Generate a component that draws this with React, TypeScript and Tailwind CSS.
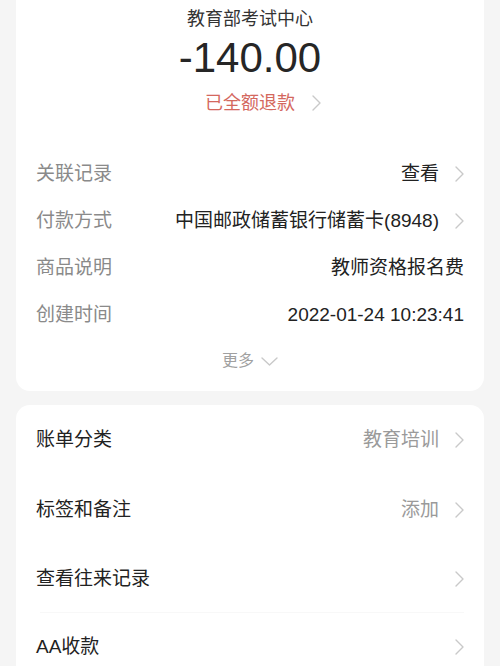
import React from "react";

const FONT = { fontFamily: '"Liberation Sans", "Noto Sans CJK SC", sans-serif' };

function ChevronRight({ className = "" }: { className?: string }) {
  return (
    <svg width="9" height="16" viewBox="0 0 9 16" className={className} fill="none">
      <polyline points="1,1 8,8 1,15" stroke="#c9c9c9" strokeWidth="1.4" strokeLinecap="round" strokeLinejoin="round" />
    </svg>
  );
}

function ChevronDown() {
  return (
    <svg width="17" height="9" viewBox="0 0 17 9" fill="none">
      <polyline points="1,1 8.5,8 16,1" stroke="#c9c9c9" strokeWidth="1.4" strokeLinecap="round" strokeLinejoin="round" />
    </svg>
  );
}

function InfoRow({ label, value, arrow }: { label: string; value: string; arrow?: boolean }) {
  return (
    <div className="flex h-[47px] items-center justify-between">
      <span className="text-[19px] leading-[24px] text-[#8a8a8a]">{label}</span>
      <div className="flex items-center">
        <span className="text-[19px] leading-[24px] text-[#222]">{value}</span>
        {arrow && <ChevronRight className="ml-[16px]" />}
      </div>
    </div>
  );
}

function ActionRow({ label, value, h }: { label: string; value?: string; h: string }) {
  return (
    <div className={`flex items-center justify-between ${h}`}>
      <span className="text-[19px] leading-[24px] text-[#222]">{label}</span>
      <div className="flex items-center">
        {value && <span className="text-[19px] leading-[24px] text-[#9a9a9a]">{value}</span>}
        <ChevronRight className="ml-[16px]" />
      </div>
    </div>
  );
}

export default function App() {
  return (
    <div className="h-[666px] w-[500px] overflow-hidden bg-[#f5f5f5] px-4" style={FONT}>
      <div className="rounded-b-[14px] bg-white pl-5 pr-[20px] pt-[7px] pb-[18px]">
        <div className="text-center text-[18px] leading-[24px] text-[#333]">教育部考试中心</div>
        <div className="mt-[3px] text-center text-[42px] leading-[48px] text-[#262626]">-140.00</div>
        <div className="mt-[9px] flex justify-center">
          <span className="relative text-[18px] leading-[24px] text-[#d4685e]">
            已全额退款
            <span className="absolute left-full top-[4px] ml-[17px] flex">
              <ChevronRight />
            </span>
          </span>
        </div>
        <div className="mt-[35px]">
          <InfoRow label="关联记录" value="查看" arrow />
          <InfoRow label="付款方式" value="中国邮政储蓄银行储蓄卡(8948)" arrow />
          <InfoRow label="商品说明" value="教师资格报名费" />
          <InfoRow label="创建时间" value="2022-01-24 10:23:41" />
        </div>
        <div className="mt-[11px] flex items-center justify-center gap-[7px]">
          <span className="text-[16px] leading-[24px] text-[#a0a0a0]">更多</span>
          <ChevronDown />
        </div>
      </div>

      <div className="mt-[14px] rounded-[14px] bg-white pl-5 pr-[20px]">
        <ActionRow label="账单分类" value="教育培训" h="h-[70px]" />
        <ActionRow label="标签和备注" value="添加" h="h-[70px]" />
        <ActionRow label="查看往来记录" h="h-[67px]" />
        <div className="ml-[4px] h-px bg-[#f8f8f8]" />
        <ActionRow label="AA收款" h="h-[68px]" />
      </div>
    </div>
  );
}
